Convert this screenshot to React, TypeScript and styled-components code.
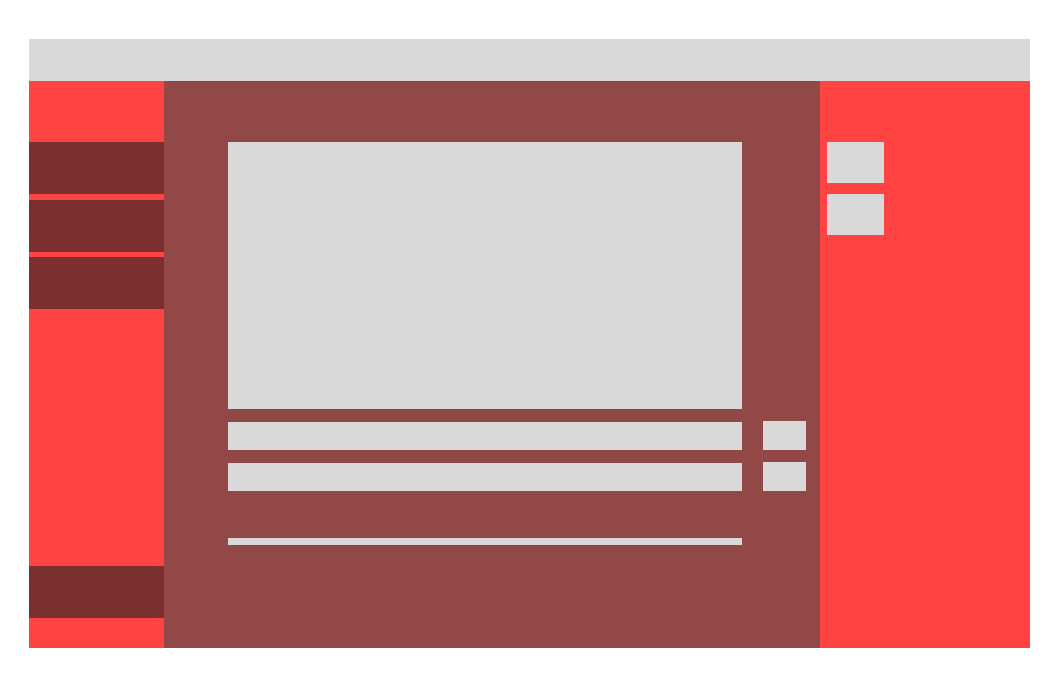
import styled, { createGlobalStyle } from "styled-components";

const GlobalStyle = createGlobalStyle`
  html, body {
    margin: 0;
    padding: 0;
    background: #ffffff;
    font-family: "Liberation Sans", Arial, sans-serif;
  }
`;

const Page = styled.div`
  padding: 39px 0 0 29px;
  width: 1001px;
`;

const Header = styled.header`
  height: 42px;
  background: #d9d9d9;
`;

const Body = styled.div`
  display: flex;
  height: 567px;
`;

const Sidebar = styled.nav`
  width: 135px;
  flex: none;
  background: #ff4343;
  display: flex;
  flex-direction: column;
  gap: 5.5px;
  padding: 61px 0 30px;
  box-sizing: border-box;
`;

const NavItem = styled.div<{ $bottom?: boolean }>`
  height: 52px;
  flex: none;
  background: #7b2f2f;
  margin-top: ${(p) => (p.$bottom ? "auto" : "0")};
`;

const Main = styled.main`
  width: 656px;
  flex: none;
  background: #934848;
  padding: 61px 0 0 64px;
  box-sizing: border-box;
  display: flex;
  flex-direction: column;
`;

const Preview = styled.div`
  width: 514px;
  height: 267px;
  background: #d9d9d9;
  margin-bottom: 12px;
`;

const Row = styled.div`
  display: flex;
  align-items: flex-end;
  gap: 21px;
  height: 29px;
  margin-bottom: 12px;
`;

const Field = styled.div`
  width: 514px;
  height: 28px;
  background: #d9d9d9;
`;

const SmallButton = styled.div`
  width: 43px;
  height: 29px;
  background: #d9d9d9;
`;

const Progress = styled.div`
  width: 514px;
  height: 7px;
  background: #d9d9d9;
  margin-top: 35px;
`;

const Aside = styled.aside`
  flex: 1;
  background: #ff4343;
  padding: 61px 7px 0;
  display: flex;
  flex-direction: column;
  gap: 11px;
`;

const Tile = styled.div`
  width: 57px;
  height: 41px;
  background: #d9d9d9;
`;

export default function App() {
  return (
    <>
      <GlobalStyle />
      <Page>
        <Header />
        <Body>
          <Sidebar>
            <NavItem />
            <NavItem />
            <NavItem />
            <NavItem $bottom />
          </Sidebar>
          <Main>
            <Preview />
            <Row>
              <Field />
              <SmallButton />
            </Row>
            <Row>
              <Field />
              <SmallButton />
            </Row>
            <Progress />
          </Main>
          <Aside>
            <Tile />
            <Tile />
          </Aside>
        </Body>
      </Page>
    </>
  );
}
